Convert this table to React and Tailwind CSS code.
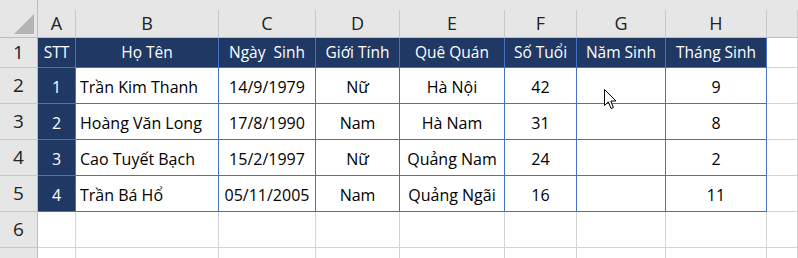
import React from "react";

const COLS = ["A", "B", "C", "D", "E", "F", "G", "H", ""];
const GRID = "grid grid-cols-[38px_38px_143px_97px_84px_105px_72px_89px_101px_1fr]";

const HEAD = ["STT", "Họ Tên", "Ngày  Sinh", "Giới Tính", "Quê Quán", "Số Tuổi", "Năm Sinh", "Tháng Sinh"];

const ROWS = [
  ["1", "Trần Kim Thanh", "14/9/1979", "Nữ", "Hà Nội", "42", "", "9"],
  ["2", "Hoàng Văn Long", "17/8/1990", "Nam", "Hà Nam", "31", "", "8"],
  ["3", "Cao Tuyết Bạch", "15/2/1997", "Nữ", "Quảng Nam", "24", "", "2"],
  ["4", "Trần Bá Hổ", "05/11/2005", "Nam", "Quảng Ngãi", "16", "", "11"],
];

function RowNum({ n, h }) {
  return (
    <div
      className={`${h} flex items-center justify-center bg-[#e6e6e6] border-r border-b border-r-[#bdbdbd] border-b-[#c8c8c8] text-[19px] text-[#222]`}
    >
      {n}
    </div>
  );
}

function Cursor() {
  return (
    <svg
      className="absolute left-[604px] top-[89px]"
      width="13"
      height="21"
      viewBox="0 0 13 21"
    >
      <path
        d="M0.5 0.5 L0.5 16.5 L4.3 12.8 L7 19.5 L9.4 18.5 L6.8 12 L12 12 Z"
        fill="#fff"
        stroke="#000"
        strokeWidth="1"
        strokeLinejoin="miter"
      />
    </svg>
  );
}

export default function App() {
  return (
    <div
      className="relative w-[798px] h-[258px] overflow-hidden bg-white text-black"
      style={{ fontFamily: "'Open Sans', 'Noto Sans', sans-serif" }}
    >
      {/* column letters */}
      <div className={`${GRID} h-[38px] bg-[#e6e6e6] border-b border-[#bdbdbd]`}>
        <div className="flex items-end justify-end pr-[3px] pb-[3px] border-r border-[#bdbdbd]">
          <div className="w-[20px] h-[20px] bg-[#b4b4b4] [clip-path:polygon(100%_0,100%_100%,0_100%)]" />
        </div>
        {COLS.map((c, i) => (
          <div key={i} className="pt-[10px] flex">
            <div className="flex-1 flex items-center justify-center border-r border-[#c8c8c8] text-[18px] text-[#222]">
              {c}
            </div>
          </div>
        ))}
      </div>

      {/* row 1: table header */}
      <div className={GRID}>
        <RowNum n="1" h="h-[30px]" />
        {HEAD.map((t, i) => (
          <div
            key={i}
            className="h-[30px] flex items-center justify-center bg-[#203864] text-white text-[15.5px] whitespace-pre border-r border-b border-[#4472c4]"
          >
            {t}
          </div>
        ))}
        <div className="h-[30px] border-r border-b border-[#d4d4d4]" />
      </div>

      {/* data rows */}
      {ROWS.map((r, ri) => (
        <div key={ri} className={GRID}>
          <RowNum n={String(ri + 2)} h="h-[36px]" />
          {r.map((v, ci) => (
            <div
              key={ci}
              className={`h-[36px] flex items-center pt-[2px] border-r border-b border-[#4472c4] text-[16px] ${
                ci === 0 ? "bg-[#203864] text-white justify-center" : ci === 1 ? "pl-[4px]" : "justify-center"
              }`}
            >
              {v}
            </div>
          ))}
          <div className="h-[36px] border-r border-b border-[#d4d4d4]" />
        </div>
      ))}

      {/* empty rows; row 7 is cut by the window edge */}
      {["6", ""].map((n, ri) => (
        <div key={ri} className={GRID}>
          <RowNum n={n} h="h-[36px]" />
          {COLS.map((c, i) => (
            <div key={i} className="h-[36px] border-r border-b border-[#d4d4d4]" />
          ))}
        </div>
      ))}

      <Cursor />
    </div>
  );
}
